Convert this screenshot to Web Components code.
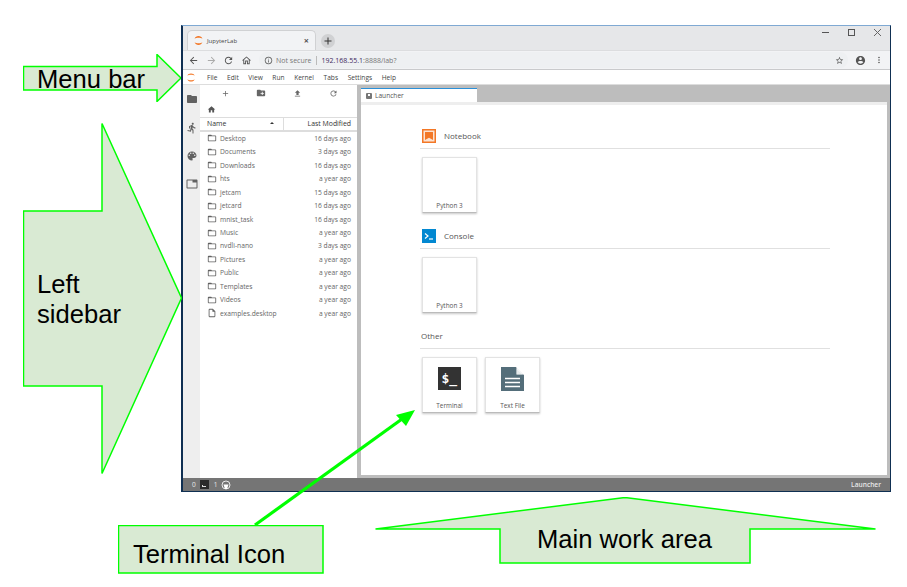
<!DOCTYPE html>
<html>
<head>
<meta charset="utf-8">
<title>JupyterLab interface</title>
<style>
  html, body { margin: 0; padding: 0; background: #fff; }
  body { width: 907px; height: 587px; position: relative; overflow: hidden; font-family: "Liberation Sans", Arial, sans-serif; }
</style>
</head>
<body>
<anno-shape x="23" y="54" w="158" h="48" points="0.5,12.5 134,12.5 134,0.5 158,24 134,47.5 134,36 0.5,36" tx="14" ty="9.5">Menu bar</anno-shape>
<anno-shape x="23" y="123" w="159" h="351" points="0.5,88 79,88 79,0.5 158.5,175 79,350.5 79,263 0.5,263" tx="14" ty="146">Left<br>sidebar</anno-shape>
<anno-shape x="118" y="525" w="206" h="49" points="0.5,0.5 205,0.5 205,48 0.5,48" tx="15" ty="13.5">Terminal Icon</anno-shape>
<anno-shape x="375" y="497" w="501" h="67" points="0.5,32 250,0.5 500.5,32 375,32 375,66 125,66 125,32" tx="162" ty="26.5">Main work area</anno-shape>

<browser-window>
  <jl-menubar slot="app"></jl-menubar>
  <div slot="app" style="display:flex;flex:1;min-height:0">
    <jl-sidebar></jl-sidebar>
    <jl-filebrowser>
      <file-row name="Desktop" date="16 days ago"></file-row>
      <file-row name="Documents" date="3 days ago"></file-row>
      <file-row name="Downloads" date="16 days ago"></file-row>
      <file-row name="hts" date="a year ago"></file-row>
      <file-row name="jetcam" date="15 days ago"></file-row>
      <file-row name="jetcard" date="16 days ago"></file-row>
      <file-row name="mnist_task" date="16 days ago"></file-row>
      <file-row name="Music" date="a year ago"></file-row>
      <file-row name="nvdli-nano" date="3 days ago"></file-row>
      <file-row name="Pictures" date="a year ago"></file-row>
      <file-row name="Public" date="a year ago"></file-row>
      <file-row name="Templates" date="a year ago"></file-row>
      <file-row name="Videos" date="a year ago"></file-row>
      <file-row name="examples.desktop" date="a year ago" type="file"></file-row>
    </jl-filebrowser>
    <jl-launcher>
      <launcher-section title="Notebook" icon="notebook">
        <launcher-card label="Python 3"></launcher-card>
      </launcher-section>
      <launcher-section title="Console" icon="console">
        <launcher-card label="Python 3"></launcher-card>
      </launcher-section>
      <launcher-section title="Other">
        <launcher-card label="Terminal" icon="terminal"></launcher-card>
        <launcher-card label="Text File" icon="textfile"></launcher-card>
      </launcher-section>
    </jl-launcher>
  </div>
  <jl-statusbar slot="app"></jl-statusbar>
</browser-window>

<!-- arrow from the Terminal Icon box to the launcher card, sits over the window -->
<terminal-pointer></terminal-pointer>

<script>
const ICONS = {
  folder: 'M10 4H4c-1.1 0-2 .9-2 2v12c0 1.1.9 2 2 2h16c1.1 0 2-.9 2-2V8c0-1.1-.9-2-2-2h-8l-2-2z',
  folderOutline: 'M20 6h-8l-2-2H4c-1.1 0-2 .9-2 2v12c0 1.1.9 2 2 2h16c1.1 0 2-.9 2-2V8c0-1.1-.9-2-2-2zm0 12H4V8h16v10z',
  file: 'M14 2H6c-1.1 0-2 .9-2 2v16c0 1.1.9 2 2 2h12c1.1 0 2-.9 2-2V8l-6-6zm4 18H6V4h7v5h5v11z',
  runner: 'M13.49 5.48c1.1 0 2-.9 2-2s-.9-2-2-2-2 .9-2 2 .9 2 2 2zm-3.6 13.9l1-4.4 2.1 2v6h2v-7.5l-2.1-2 .6-3c1.3 1.5 3.3 2.5 5.5 2.5v-2c-1.9 0-3.5-1-4.3-2.4l-1-1.6c-.4-.6-1-1-1.7-1-.3 0-.5.1-.8.1l-5.2 2.2v4.7h2v-3.4l1.8-.7-1.6 8.1-4.9-1-.4 2 7 1.4z',
  palette: 'M12 3a9 9 0 0 0 0 18c.83 0 1.5-.67 1.5-1.5 0-.39-.15-.74-.39-1.01-.23-.26-.38-.61-.38-.99 0-.83.67-1.5 1.5-1.5H16c2.76 0 5-2.24 5-5 0-4.42-4.03-8-9-8zm-5.5 9c-.83 0-1.5-.67-1.5-1.5S5.67 9 6.5 9 8 9.67 8 10.5 7.33 12 6.5 12zm3-4C8.67 8 8 7.33 8 6.5S8.67 5 9.5 5s1.5.67 1.5 1.5S10.33 8 9.5 8zm5 0c-.83 0-1.5-.67-1.5-1.5S13.67 5 14.5 5s1.5.67 1.5 1.5S15.33 8 14.5 8zm3 4c-.83 0-1.5-.67-1.5-1.5S16.67 9 17.5 9s1.5.67 1.5 1.5-.67 1.5-1.5 1.5z',
  tabs: 'M21 3H3c-1.1 0-2 .9-2 2v14c0 1.1.9 2 2 2h18c1.1 0 2-.9 2-2V5c0-1.1-.9-2-2-2zm0 16H3V5h10v4h8v10z',
  add: 'M19 13h-6v6h-2v-6H5v-2h6V5h2v6h6v2z',
  folderPlus: 'M20 6h-8l-2-2H4c-1.11 0-2 .89-2 2v12c0 1.11.89 2 2 2h16c1.11 0 2-.89 2-2V8c0-1.11-.89-2-2-2zm-1 8h-3v3h-2v-3h-3v-2h3V9h2v3h3v2z',
  upload: 'M9 16h6v-6h4l-7-7-7 7h4zm-4 2h14v2H5z',
  refresh: 'M17.65 6.35C16.2 4.9 14.21 4 12 4c-4.42 0-7.99 3.58-7.99 8s3.57 8 7.99 8c3.73 0 6.84-2.55 7.73-6h-2.08c-.82 2.33-3.04 4-5.65 4-3.31 0-6-2.69-6-6s2.69-6 6-6c1.66 0 3.14.69 4.22 1.78L13 11h7V4l-2.35 2.35z',
  home: 'M10 20v-6h4v6h5v-8h3L12 3 2 12h3v8z',
  back: 'M20 11H7.83l5.59-5.59L12 4l-8 8 8 8 1.41-1.41L7.83 13H20v-2z',
  forward: 'M12 4l-1.41 1.41L16.17 11H4v2h12.17l-5.58 5.59L12 20l8-8z',
  homeOutline: 'M12 5.69l5 4.5V18h-2v-6H9v6H7v-7.81l5-4.5M12 3L2 12h3v8h6v-6h2v6h6v-8h3L12 3z',
  info: 'M11 7h2v2h-2zm0 4h2v6h-2zm1-9C6.48 2 2 6.48 2 12s4.48 10 10 10 10-4.48 10-10S17.52 2 12 2zm0 18c-4.41 0-8-3.59-8-8s3.59-8 8-8 8 3.59 8 8-3.59 8-8 8z',
  star: 'M22 9.24l-7.19-.62L12 2 9.19 8.63 2 9.24l5.46 4.73L5.82 21 12 17.27 18.18 21l-1.63-7.03L22 9.24zM12 15.4l-3.76 2.27 1-4.28-3.32-2.88 4.38-.38L12 6.1l1.71 4.04 4.38.38-3.32 2.88 1 4.28L12 15.4z',
  account: 'M12 2C6.48 2 2 6.48 2 12s4.48 10 10 10 10-4.48 10-10S17.52 2 12 2zm0 3c1.66 0 3 1.34 3 3s-1.34 3-3 3-3-1.34-3-3 1.34-3 3-3zm0 14.2c-2.5 0-4.71-1.28-6-3.22.03-1.99 4-3.08 6-3.08s5.97 1.09 6 3.08c-1.29 1.94-3.5 3.22-6 3.22z',
  kebab: 'M12 8c1.1 0 2-.9 2-2s-.9-2-2-2-2 .9-2 2 .9 2 2 2zm0 2c-1.1 0-2 .9-2 2s.9 2 2 2 2-.9 2-2-.9-2-2-2zm0 6c-1.1 0-2 .9-2 2s.9 2 2 2 2-.9 2-2-.9-2-2-2z',
};

const icon = (name, size, color) => `<svg width="${size}" height="${size}" viewBox="0 0 24 24" fill="${color}" style="display:block;flex:none"><path d="${ICONS[name]}"/></svg>`;

// the two orange arcs, used for the favicon and the menu bar
const jupyterLogo = (w, h) => `
  <svg width="${w}" height="${h}" viewBox="0 0 14 18" style="display:block;flex:none">
    <path d="M.6 6C2 .4 12 .4 13.4 6 10.6 3.8 3.4 3.8 .6 6z" fill="#f37726"/>
    <path d="M.6 12C2 17.6 12 17.6 13.4 12 10.6 14.2 3.4 14.2 .6 12z" fill="#f37726"/>
  </svg>`;

function makeShadow(el, html) {
  el.attachShadow({ mode: 'open' }).innerHTML = html;
}

class AnnoShape extends HTMLElement {
  constructor() {
    super();
    const a = n => this.getAttribute(n);
    makeShadow(this, `
      <style>
        :host { display: block; position: absolute; left: ${a('x')}px; top: ${a('y')}px; width: ${a('w')}px; height: ${a('h')}px; z-index: 3; }
        svg { position: absolute; inset: 0; display: block; }
        .text { position: absolute; left: ${a('tx')}px; top: ${a('ty')}px; font: 25.6px/30px "Liberation Sans", Arial, sans-serif; color: #000; white-space: nowrap; }
      </style>
      <svg width="${a('w')}" height="${a('h')}"><polygon points="${a('points')}" fill="#d9ead3" stroke="#00ff00" stroke-width="1.5"/></svg>
      <div class="text"><slot></slot></div>
    `);
  }
}

class TerminalPointer extends HTMLElement {
  constructor() {
    super();
    makeShadow(this, `
      <style>
        :host { display: block; position: absolute; left: 250px; top: 405px; width: 170px; height: 125px; z-index: 4; }
        svg { display: block; }
      </style>
      <svg width="170" height="125">
        <line x1="5" y1="120" x2="152" y2="14" stroke="#00ff00" stroke-width="3.2"/>
        <polygon points="165,5 146,10 156,21" fill="#00ff00"/>
      </svg>
    `);
  }
}

class BrowserWindow extends HTMLElement {
  constructor() {
    super();
    makeShadow(this, `
      <style>
        :host {
          display: flex; flex-direction: column; position: absolute; left: 181px; top: 25px; width: 710px; height: 467px;
          box-sizing: border-box; border: solid #0f2f52; border-width: 0 1px 1px 2px; border-top: 1px solid #7fa9d3;
          background: #fff; font-family: "Open Sans", "Noto Sans", sans-serif; color: #555;
        }
        .tabstrip { height: 24px; background: #e6e7e9; display: flex; align-items: flex-end; padding-left: 4px; flex: none; position: relative; }
        .tab { width: 129px; height: 20px; box-sizing: border-box; background: #f2f3f5; border: 1px solid #d0d1d3; border-bottom: 0; border-radius: 5px 5px 0 0; display: flex; align-items: center; padding: 0 6px 0 6px; gap: 4px; font-size: 6px; color: #444; }
        .tab span { flex: 1; }
        .x { font-size: 9px; color: #555; line-height: 1; }
        .plus { width: 14px; height: 14px; margin: 0 0 2px 5px; border-radius: 50%; background: #d0d1d3; display: flex; align-items: center; justify-content: center; }
        .controls { margin-left: auto; display: flex; align-items: center; align-self: flex-start; height: 12px; padding: 0 8px 0 0; gap: 17px; }
        .controls svg { display: block; }
        .toolbar { height: 20px; box-sizing: border-box; background: #f2f3f5; border-top: 1px solid #dcdddf; border-bottom: 1px solid #c9cacc; display: flex; align-items: center; padding-left: 5px; flex: none; }
        .nav { width: 17.5px; display: flex; justify-content: flex-start; }
        .omni { flex: 1; margin: 0 7px 0 1px; height: 16px; border-radius: 8px; background: #eef0f2; display: flex; align-items: center; padding: 0 4px 0 5px; font-size: 7px; color: #777; gap: 3px; }
        .sep { width: 1px; height: 9px; background: #bbb; margin: 0 2px 0 1px; }
        .host { color: #3f2a5e; }
        .rest { margin-left: auto; }
        .right { display: flex; align-items: center; gap: 8px; width: 35px; }
        .app { flex: 1; min-height: 0; display: flex; flex-direction: column; }
      </style>
      <div class="tabstrip">
        <div class="tab">
          ${jupyterLogo(9, 11)}
          <span>JupyterLab</span>
          <b class="x">×</b>
        </div>
        <div class="plus">${icon('add', 12, '#333')}</div>
        <div class="controls">
          <svg width="9" height="9"><path d="M1 4.5H8" stroke="#555" stroke-width="1"/></svg>
          <svg width="9" height="9"><rect x="1.5" y="1.5" width="6" height="6" fill="none" stroke="#555"/></svg>
          <svg width="9" height="9"><path d="M1 1L8 8M8 1L1 8" stroke="#666" stroke-width="1"/></svg>
        </div>
      </div>
      <div class="toolbar">
        <div class="nav">${icon('back', 11, '#555')}</div>
        <div class="nav">${icon('forward', 11, '#aaa')}</div>
        <div class="nav">${icon('refresh', 11, '#555')}</div>
        <div class="nav">${icon('homeOutline', 11, '#555')}</div>
        <div class="omni">
          ${icon('info', 9, '#555')}
          <span>Not secure</span><i class="sep"></i>
          <span><span class="host">192.168.55.1</span>:8888/lab?</span>
          <span class="rest">${icon('star', 9, '#555')}</span>
        </div>
        <div class="right">${icon('account', 11, '#555')}${icon('kebab', 10, '#555')}</div>
      </div>
      <div class="app"><slot name="app"></slot></div>
    `);
  }
}

class JlMenubar extends HTMLElement {
  constructor() {
    super();
    const items = ['File', 'Edit', 'View', 'Run', 'Kernel', 'Tabs', 'Settings', 'Help'];
    makeShadow(this, `
      <style>
        :host { display: flex; height: 15px; align-items: center; background: #fff; border-bottom: 1px solid #ddd; box-sizing: border-box; padding-left: 4px; font-size: 6.6px; color: #444; flex: none; }
        .logo { width: 20px; flex: none; }
        span { margin-right: 9.6px; }
      </style>
      <div class="logo">${jupyterLogo(8, 11)}</div>
      ${items.map(i => `<span>${i}</span>`).join('')}
    `);
  }
}

class JlSidebar extends HTMLElement {
  constructor() {
    super();
    const tabs = ['folder', 'runner', 'palette', 'tabs'];
    makeShadow(this, `
      <style>
        :host { display: flex; flex-direction: column; width: 17px; flex: none; background: #eee; }
        div { height: 28.4px; display: flex; align-items: center; justify-content: center; box-sizing: border-box; }
        div:first-child { background: #f7f7f7; }
      </style>
      ${tabs.map(t => `<div>${icon(t, 12, '#616161')}</div>`).join('')}
    `);
  }
}

class JlFilebrowser extends HTMLElement {
  constructor() {
    super();
    makeShadow(this, `
      <style>
        :host { display: flex; flex-direction: column; width: 157px; flex: none; background: #fff; font-size: 6.9px; color: #555; box-sizing: border-box; }
        .tools { display: grid; grid-template-columns: repeat(4, 36px); padding: 0 6px 0 7px; height: 16px; align-items: center; justify-items: center; flex: none; }
        .crumbs { height: 16px; padding-left: 7px; display: flex; align-items: center; flex: none; }
        .head { display: flex; height: 14.5px; box-sizing: border-box; border-top: 1px solid #ddd; border-bottom: 2px solid #ddd; color: #333; flex: none; }
        .name { width: 84px; padding: 0 0 0 7px; box-sizing: border-box; display: flex; align-items: center; position: relative; border-right: 1px solid #ddd; }
        .caret { position: absolute; left: 70px; top: 4px; width: 0; height: 0; border: solid transparent; border-width: 0 2.5px 2.5px; border-bottom-color: #333; }
        .mod { flex: 1; padding-right: 6px; display: flex; align-items: center; justify-content: flex-end; }
      </style>
      <div class="tools">
        ${icon('add', 9, '#666')}${icon('folderPlus', 10, '#666')}${icon('upload', 9, '#666')}${icon('refresh', 9, '#666')}
      </div>
      <div class="crumbs">${icon('home', 9, '#555')}</div>
      <div class="head">
        <div class="name">Name<i class="caret"></i></div>
        <div class="mod">Last Modified</div>
      </div>
      <slot></slot>
    `);
  }
}

class FileRow extends HTMLElement {
  constructor() {
    super();
    const isFile = this.getAttribute('type') === 'file';
    makeShadow(this, `
      <style>
        :host { display: flex; align-items: center; height: 13.47px; padding: 0 6px 0 7px; flex: none; font-size: 6.7px; color: #666; }
        .name { margin-left: 3px; flex: 1; }
      </style>
      ${icon(isFile ? 'file' : 'folderOutline', 10, '#616161')}
      <span class="name">${this.getAttribute('name')}</span>
      <span>${this.getAttribute('date')}</span>
    `);
  }
}

class JlLauncher extends HTMLElement {
  constructor() {
    super();
    makeShadow(this, `
      <style>
        :host { display: flex; flex-direction: column; flex: 1; min-width: 0; background: #bdbdbd; border-left: 4px solid #bdbdbd; padding-right: 3px; padding-bottom: 3px; box-sizing: border-box; }
        .tabs { height: 17px; display: flex; align-items: flex-end; flex: none; }
        .tab { width: 116px; height: 14px; box-sizing: border-box; background: #fff; border-top: 1px solid #2a8fd8; display: flex; align-items: center; padding-left: 5px; gap: 3px; font-size: 6.6px; color: #555; }
        .ico { width: 6px; height: 6px; background: #777; border-radius: 1px; position: relative; }
        .ico::after { content: ""; position: absolute; left: 2px; top: 1px; width: 2px; height: 2px; background: #fff; }
        .panel { flex: 1; min-height: 0; background: #fff; border-top: 3px solid #eee; padding: 24px 0 0 59px; box-sizing: border-box; }
        .body { width: 410px; }
      </style>
      <div class="tabs"><div class="tab"><i class="ico"></i>Launcher</div></div>
      <div class="panel"><div class="body"><slot></slot></div></div>
    `);
  }
}

class LauncherSection extends HTMLElement {
  constructor() {
    super();
    const kind = this.getAttribute('icon');
    const logos = {
      notebook: `<svg width="14" height="14" viewBox="0 0 14 14"><rect x=".75" y=".75" width="12.5" height="12.5" fill="#fbe3d2" stroke="#f37726" stroke-width="1.5"/><path d="M3 3H11V11L7 8.8 3 11z" fill="#f37726"/></svg>`,
      console: `<svg width="14" height="14" viewBox="0 0 14 14"><rect width="14" height="14" fill="#0288d1"/><path d="M3 4.5L6 7 3 9.5" fill="none" stroke="#fff" stroke-width="1.2"/><path d="M7 10H11" stroke="#fff" stroke-width="1.2"/></svg>`,
    };
    makeShadow(this, `
      <style>
        :host { display: block; margin-bottom: 16px; }
        .head { display: flex; align-items: center; height: 14px; padding: 0 0 5px ${kind ? 2 : 1}px; border-bottom: 1px solid #e0e0e0; font-size: 8px; color: #555; }
        .head span { margin-top: -2px; }
        .logo { width: 22px; flex: none; }
        .cards { display: flex; gap: 8px; padding: 8px 0 0 2px; }
      </style>
      <div class="head">${kind ? `<div class="logo" style="height:14px">${logos[kind]}</div>` : ''}<span>${this.getAttribute('title')}</span></div>
      <div class="cards"><slot></slot></div>
    `);
  }
}

class LauncherCard extends HTMLElement {
  constructor() {
    super();
    const kind = this.getAttribute('icon');
    const art = {
      terminal: `<svg width="23" height="23" viewBox="0 0 23 23"><rect width="23" height="23" fill="#333"/><text x="3.5" y="16" font-family="DejaVu Sans Mono, monospace" font-weight="700" font-size="13" fill="#fff">$_</text></svg>`,
      textfile: `<svg width="23" height="24" viewBox="0 0 23 24"><path d="M0 0H15L23 8V24H0z" fill="#546e7a"/><path d="M15.5 0L23 7.5H15.5z" fill="#fff"/><path d="M15.5 1.5V7.5H21.5" fill="#cfd8dc" opacity=".5"/><path d="M4 11.5H19M4 15.5H19M4 19.5H19" stroke="#fff" stroke-width="1.4"/></svg>`,
    };
    makeShadow(this, `
      <style>
        :host { display: flex; flex-direction: column; align-items: center; width: 55px; height: 56px; box-sizing: border-box; border: 1px solid #e3e3e3; border-bottom: 1px solid #bbb; box-shadow: 0 1px 2px rgba(0,0,0,.22); background: #fff; font-size: 6.4px; color: #555; position: relative; }
        .art { height: 23px; margin-top: 9px; }
        .label { margin-top: auto; margin-bottom: 2px; line-height: 9px; }
      </style>
      ${kind ? `<div class="art">${art[kind]}</div>` : ''}
      <div class="label">${this.getAttribute('label')}</div>
    `);
  }
}

class JlStatusbar extends HTMLElement {
  constructor() {
    super();
    makeShadow(this, `
      <style>
        :host { display: flex; align-items: center; height: 13px; background: #757575; color: #e8e8e8; font-size: 6.6px; padding: 0 9px 0 9px; gap: 4px; flex: none; }
        .term { width: 9px; height: 9px; background: #2b2b2b; position: relative; }
        .term::after { content: ""; position: absolute; left: 2px; bottom: 2px; width: 4px; height: 2px; border-left: 1px solid #ddd; border-bottom: 1px solid #ddd; box-sizing: border-box; }
        .right { margin-left: auto; font-weight: 600; }
      </style>
      <span>0</span><i class="term"></i><span style="margin-left:1px">1</span>
      <svg width="10" height="10" viewBox="0 0 10 10" style="margin-left:-1px"><circle cx="5" cy="5" r="4" fill="none" stroke="#e8e8e8"/><path d="M2.5 4.5H7.5L6 9H4z" fill="#fff"/></svg>
      <span class="right">Launcher</span>
    `);
  }
}

customElements.define('anno-shape', AnnoShape);
customElements.define('terminal-pointer', TerminalPointer);
customElements.define('browser-window', BrowserWindow);
customElements.define('jl-menubar', JlMenubar);
customElements.define('jl-sidebar', JlSidebar);
customElements.define('jl-filebrowser', JlFilebrowser);
customElements.define('file-row', FileRow);
customElements.define('jl-launcher', JlLauncher);
customElements.define('launcher-section', LauncherSection);
customElements.define('launcher-card', LauncherCard);
customElements.define('jl-statusbar', JlStatusbar);
</script>
</body>
</html>
